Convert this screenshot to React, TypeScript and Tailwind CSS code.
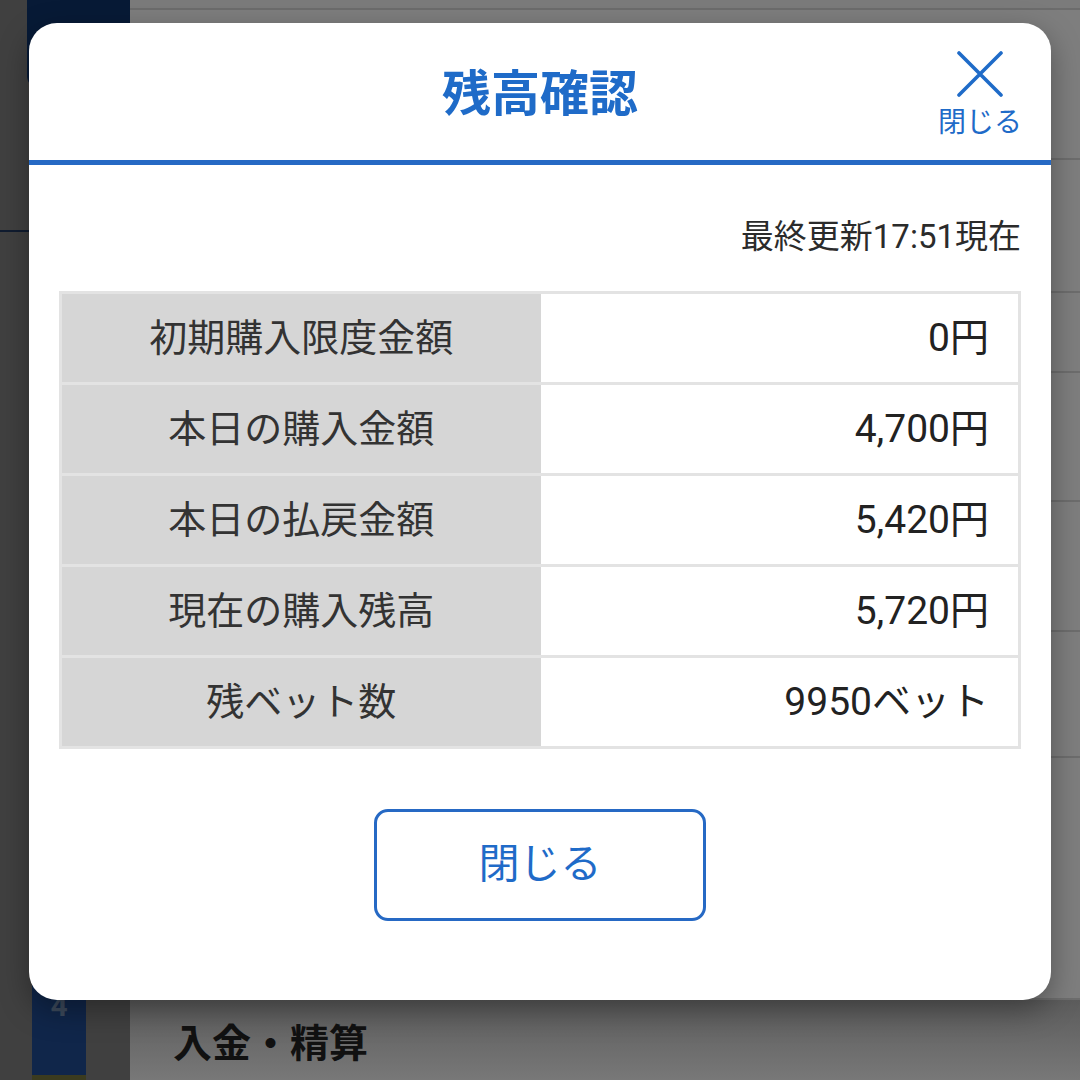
import React from 'react';

interface BalanceRow {
  label: string;
  value: string;
}

const rows: BalanceRow[] = [
  { label: '初期購入限度金額', value: '0円' },
  { label: '本日の購入金額', value: '4,700円' },
  { label: '本日の払戻金額', value: '5,420円' },
  { label: '現在の購入残高', value: '5,720円' },
  { label: '残ベット数', value: '9950ベット' },
];

// heights of the list rows behind the overlay (right column)
const bgRows = [150, 133, 80, 129, 130, 126, 242];

function CloseIcon() {
  return (
    <svg width="46" height="46" viewBox="0 0 46 46" fill="none">
      <path d="M2 2 L44 44 M44 2 L2 44" stroke="#1f6bc8" strokeWidth="3.6" strokeLinecap="round" />
    </svg>
  );
}

function Background() {
  return (
    <div className="absolute inset-0 flex">
      {/* Left step column */}
      <div className="w-[130px] h-full bg-[#404040] flex flex-col">
        <div className="ml-[27px] h-[88px] bg-[#071a36] rounded-bl-[12px]" />
        <div className="h-[142px]" />
        <div className="h-[2px] bg-[#101c30]" />
        <div className="flex-1" />
        <div className="ml-[32px] w-[54px] h-[90px] bg-[#10264a] flex justify-center pt-[6px]">
          <span className="text-[30px] font-bold leading-none text-[#3d4a5c]">4</span>
        </div>
        <div className="ml-[32px] w-[54px] h-[5px] bg-[#3b3b1f]" />
      </div>

      {/* Right list column */}
      <div className="flex-1 h-full bg-[#808080] flex flex-col">
        <div className="h-[10px] bg-[#7b7b7b] border-b-2 border-[#6c6c6c]" />
        {bgRows.map((h, i) => (
          <div
            key={i}
            className="border-b-2 border-[#6d6d6d] bg-[#7e7e7e]"
            style={{ height: h }}
          />
        ))}
        <div className="flex-1 bg-gradient-to-b from-[#5c5c5c] to-[#787878] flex items-center pl-[43px] pt-[8px]">
          <span className="text-[39px] font-bold text-[#111111]">入金・精算</span>
        </div>
      </div>
    </div>
  );
}

export default function App() {
  return (
    <div className="relative w-[1080px] h-[1080px] overflow-hidden font-['Roboto','Noto_Sans_CJK_JP',sans-serif]">
      <Background />

      {/* Modal */}
      <div className="absolute left-[29px] top-[23px] w-[1022px] h-[977px] bg-white rounded-[28px] shadow-[0_10px_30px_rgba(0,0,0,0.35)] overflow-hidden flex flex-col">
        {/* Header */}
        <div className="relative h-[137px] flex items-center justify-center">
          <h1 className="text-[49px] font-bold text-[#1f6bc8] leading-none mt-[6px]">残高確認</h1>
          <button className="absolute right-[29px] top-[28px] flex flex-col items-center">
            <CloseIcon />
            <span className="mt-[12px] text-[28px] leading-none text-[#1f6bc8]">閉じる</span>
          </button>
        </div>
        <div className="h-[5px] bg-[#2669c4]" />

        {/* Body */}
        <div className="flex-1 px-[30px] flex flex-col">
          <p className="pt-[50px] text-right text-[33px] leading-[44px] text-[#2b2b2b]">最終更新17:51現在</p>

          <table className="mt-[32px] w-full border-collapse border-[3px] border-[#e3e3e3]">
            <tbody>
              {rows.map((row) => (
                <tr key={row.label} className="h-[91px] border-b-[3px] border-[#e3e3e3]">
                  <td className="w-[480px] bg-[#d6d6d6] text-center text-[38px] text-[#333333]">
                    {row.label}
                  </td>
                  <td className="pr-[29px] text-right text-[39px] text-[#222222]">
                    {row.value}
                  </td>
                </tr>
              ))}
            </tbody>
          </table>

          <div className="mt-[60px] flex justify-center">
            <button className="w-[332px] h-[112px] rounded-[14px] border-[3px] border-[#2669c4] text-[41px] text-[#1f6bc8] flex items-center justify-center">
              閉じる
            </button>
          </div>
        </div>
      </div>
    </div>
  );
}
